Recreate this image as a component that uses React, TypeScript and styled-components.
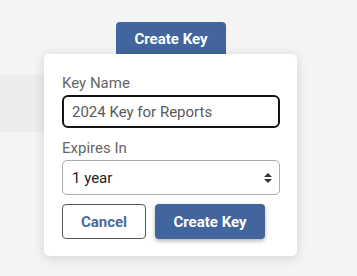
import React from 'react';
import styled, { createGlobalStyle } from 'styled-components';

const GlobalStyle = createGlobalStyle`
  html, body {
    margin: 0;
    padding: 0;
    background: #f4f4f4;
    font-family: Roboto, 'Liberation Sans', sans-serif;
  }
`;

const StyledPage = styled.div`
  width: 357px;
  height: 276px;
  position: relative;
  overflow: hidden;
  background: #f4f4f4;
`;

const StyledToolbar = styled.div`
  display: flex;
  justify-content: flex-start;
  padding: 22px 0 0 116px;
  height: 53px;
  box-sizing: border-box;
`;

const StyledTopButton = styled.button`
  width: 110px;
  height: 36px;
  border: none;
  border-radius: 4px;
  background: #41659c;
  color: #ffffff;
  font-family: Roboto, 'Liberation Sans', sans-serif;
  font-size: 15px;
  font-weight: 700;
  padding: 0 0 3px;
  cursor: pointer;
`;

const StyledTableRow = styled.div`
  width: 160px;
  height: 57px;
  background: #ececec;
  margin-top: 22px;
`;

const StyledPopover = styled.div`
  position: absolute;
  top: 54px;
  left: 44px;
  width: 253px;
  height: 202px;
  box-sizing: border-box;
  padding: 20px 17px 0 18px;
  background: #ffffff;
  border-radius: 5px;
  box-shadow: 0 2px 12px rgba(0, 0, 0, 0.14);
  display: flex;
  flex-direction: column;
`;

const StyledLabel = styled.label<{ $gap: number }>`
  display: block;
  margin-top: ${p => p.$gap}px;
  margin-bottom: 3px;
  color: #666666;
  font-size: 15px;
  line-height: 18px;
`;

const StyledInput = styled.input`
  width: 218px;
  height: 33px;
  box-sizing: border-box;
  border: 2px solid #141414;
  border-radius: 6px;
  padding: 0 8px;
  font-family: Roboto, 'Liberation Sans', sans-serif;
  font-size: 15px;
  color: #5a5a5a;
  outline: none;
`;

const StyledSelectWrap = styled.div`
  position: relative;
  width: 218px;
  height: 35px;
`;

const StyledSelect = styled.select`
  width: 100%;
  height: 100%;
  box-sizing: border-box;
  appearance: none;
  border: 1px solid #acacac;
  border-radius: 5px;
  background: #ffffff;
  padding: 0 9px;
  font-family: Roboto, 'Liberation Sans', sans-serif;
  font-size: 15px;
  color: #222222;
  outline: none;
`;

const StyledArrows = styled.svg`
  position: absolute;
  right: 8px;
  top: 13px;
  pointer-events: none;
`;

const StyledActions = styled.div`
  display: flex;
  gap: 9px;
  margin-top: 9px;
`;

const StyledButton = styled.button<{ $primary?: boolean }>`
  height: 35px;
  width: ${p => (p.$primary ? 110 : 84)}px;
  box-sizing: border-box;
  border-radius: 4px;
  border: ${p => (p.$primary ? 'none' : '1px solid #555555')};
  background: ${p => (p.$primary ? '#41659c' : '#ffffff')};
  color: ${p => (p.$primary ? '#ffffff' : '#4a6a9c')};
  box-shadow: ${p => (p.$primary ? '0 2px 4px rgba(0, 0, 0, 0.3)' : 'none')};
  font-family: Roboto, 'Liberation Sans', sans-serif;
  font-size: 15px;
  font-weight: 700;
  padding: 0;
  cursor: pointer;
`;

const App: React.FC = () => {
  return (
    <StyledPage>
      <GlobalStyle />
      <StyledToolbar>
        <StyledTopButton>Create Key</StyledTopButton>
      </StyledToolbar>
      <StyledTableRow />
      <StyledPopover>
        <StyledLabel $gap={0}>Key Name</StyledLabel>
        <StyledInput defaultValue="2024 Key for Reports" />
        <StyledLabel $gap={11}>Expires In</StyledLabel>
        <StyledSelectWrap>
          <StyledSelect defaultValue="1y">
            <option value="1y">1 year</option>
          </StyledSelect>
          <StyledArrows width="8" height="10" viewBox="0 0 8 10">
            <path d="M4 0 L8 4 H0 Z M4 10 L8 6 H0 Z" fill="#333333" />
          </StyledArrows>
        </StyledSelectWrap>
        <StyledActions>
          <StyledButton>Cancel</StyledButton>
          <StyledButton $primary>Create Key</StyledButton>
        </StyledActions>
      </StyledPopover>
    </StyledPage>
  );
};

export default App;
